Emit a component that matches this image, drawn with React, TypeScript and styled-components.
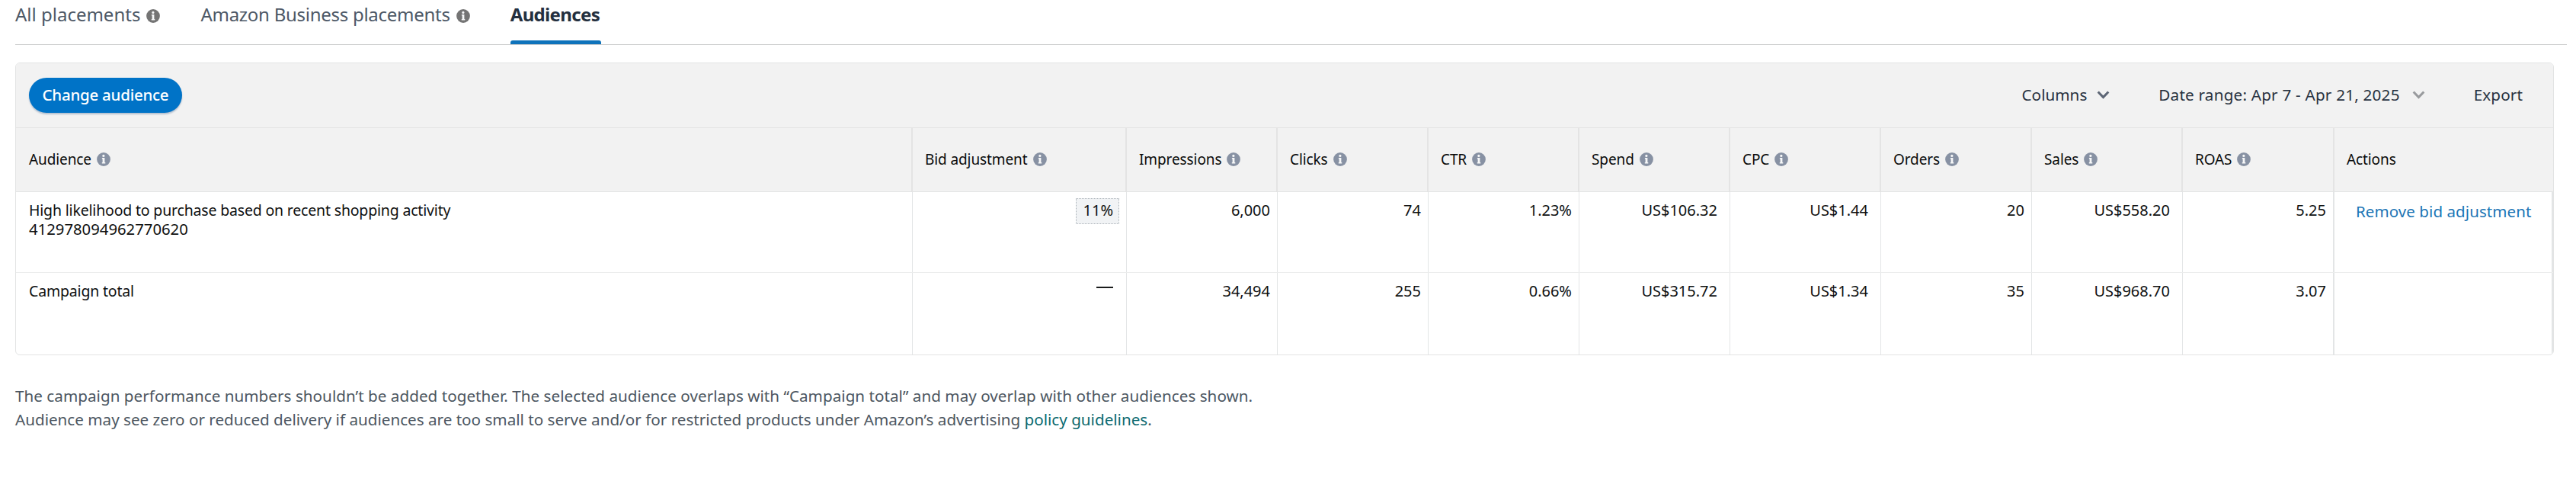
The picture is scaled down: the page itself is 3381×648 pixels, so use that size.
import React from 'react';
import styled, { createGlobalStyle } from 'styled-components';

const Global = createGlobalStyle`
  body {
    margin: 0;
    background: #fff;
    font-family: "Noto Sans", "Open Sans", sans-serif;
    color: #0f1111;
  }
  * { box-sizing: border-box; }
`;

const Page = styled.main`
  width: 3381px;
  height: 648px;
  padding-left: 20px;
  overflow: hidden;
`;

const Tabs = styled.nav`
  display: flex;
  align-items: stretch;
  gap: 53px;
  width: 3349px;
  height: 59px;
  border-bottom: 1px solid #cbcccd;
`;

const Tab = styled.a<{ $track?: number }>`
  display: flex;
  align-items: flex-start;
  gap: 8px;
  padding-top: 3px;
  height: 58px;
  font-size: 24px;
  line-height: 32px;
  white-space: nowrap;
  color: #4d5866;
  letter-spacing: ${(p) => p.$track ?? 0}px;
`;

const ActiveTab = styled(Tab)`
  flex-direction: column;
  justify-content: space-between;
  width: 119px;
  font-weight: 700;
  color: #232f3e;
`;

const Underline = styled.span`
  width: 119px;
  height: 5px;
  border-radius: 3px 3px 0 0;
  background: #0f73bb;
`;

const IconSlot = styled.span`
  display: flex;
  flex: none;
  margin-top: 9px;
`;

const Card = styled.section`
  width: 3332px;
  height: 384px;
  margin-top: 23px;
  border: 1px solid #e3e4e4;
  border-radius: 6px;
  overflow: hidden;
`;

const Toolbar = styled.div`
  display: flex;
  align-items: center;
  justify-content: space-between;
  height: 85px;
  padding: 0 40px 0 17px;
  background: #f2f2f2;
  border-bottom: 1px solid #e4e5e5;
`;

const PrimaryButton = styled.button`
  width: 201px;
  height: 46px;
  padding: 0 0 2px;
  border: 0;
  border-radius: 23px;
  background: #0073c7;
  box-shadow: 0 2px 2px rgba(40, 80, 130, 0.3);
  color: #fff;
  font: 500 20.5px "Noto Sans", sans-serif;
  letter-spacing: -0.25px;
  white-space: nowrap;
`;

const ToolbarActions = styled.div`
  display: flex;
  align-items: center;
  gap: 64px;
`;

const ToolbarItem = styled.span<{ $gap?: number; $track?: number }>`
  display: flex;
  align-items: center;
  gap: ${(p) => p.$gap ?? 0}px;
  padding-bottom: 2px;
  font-size: 20.7px;
  line-height: 30px;
  letter-spacing: ${(p) => p.$track ?? 0}px;
  white-space: nowrap;
  color: #273140;
`;

const Row = styled.div<{ $height: number; $divided?: boolean }>`
  display: grid;
  grid-template-columns: 1177px 281px repeat(7, 198px) 199px 1fr;
  height: ${(p) => p.$height}px;
  border-bottom: ${(p) => (p.$divided ? '1px solid #ebecec' : '0')};
`;

const HeaderRow = styled(Row)`
  background: #f2f2f2;
  border-bottom: 1px solid #e2e3e3;
`;

const HeaderCell = styled.div<{ $first?: boolean; $last?: boolean }>`
  display: flex;
  align-items: center;
  gap: 7px;
  padding: 0 0 1px ${(p) => (p.$first ? 17 : 16)}px;
  border-right: ${(p) => (p.$last ? '0' : '2px solid #e4e4e4')};
  font-size: 19px;
  letter-spacing: -0.1px;
  white-space: nowrap;
  color: #0b0c0c;
`;

const Cell = styled.div<{ $right?: number; $strong?: boolean }>`
  padding: 11px ${(p) => p.$right ?? 9}px 0 17px;
  border-right: ${(p) => (p.$strong ? 2 : 1)}px solid #e3e5e6;
  font-size: 20px;
  line-height: 25px;
  text-align: right;
  white-space: nowrap;
`;

const AudienceCell = styled(Cell)`
  text-align: left;
  font-size: 19.5px;
  letter-spacing: -0.18px;
`;

const AudienceId = styled.div`
  font-size: 20.3px;
  letter-spacing: 0;
`;

const BidCell = styled(Cell)`
  display: flex;
  justify-content: flex-end;
  align-items: flex-start;
  padding: 8px 9px 0 0;
`;

const BidValue = styled.span`
  width: 57px;
  height: 34px;
  padding: 2px 7px 0 0;
  border: 1px dotted #aab2b8;
  background: #f1f3f5;
`;

const Dash = styled.span`
  width: 22px;
  height: 2px;
  margin: 10px 8px 0 0;
  background: #1a1c1c;
`;

const ActionCell = styled(Cell)`
  padding: 13px 0 0 28px;
  text-align: left;
`;

const RemoveLink = styled.a`
  font-size: 20.5px;
  letter-spacing: 0.08px;
  color: #1b75b5;
`;

const Note = styled.p`
  margin: 38px 0 0;
  font-size: 20.65px;
  line-height: 31px;
  letter-spacing: ${0.02}px;
  white-space: nowrap;
  color: #4c5661;
`;

const NoteLine = styled.span<{ $track: number }>`
  display: block;
  letter-spacing: ${(p) => p.$track}px;
`;

const PolicyLink = styled.a`
  color: #0b6a70;
`;

const InfoIcon = ({ color = '#8791a3' }: { color?: string }) => (
  <svg width="18" height="18" viewBox="0 0 18 18">
    <circle cx="9" cy="9" r="8.9" fill={color} />
    <circle cx="8.9" cy="4.4" r="1.6" fill="#f6f7f8" />
    <path d="M6.9 7.1h3.5v6h.9v1.4H6.8v-1.4h.8V8.5h-.7z" fill="#f6f7f8" />
  </svg>
);

const Chevron = ({ color }: { color: string }) => (
  <svg width="17" height="11" viewBox="0 0 17 11" fill="none">
    <path d="M1.7 1.5 8.5 8.5 15.3 1.5" stroke={color} strokeWidth="3.1" />
  </svg>
);

const metrics = ['Bid adjustment', 'Impressions', 'Clicks', 'CTR', 'Spend', 'CPC', 'Orders', 'Sales', 'ROAS'];

const audienceValues = ['6,000', '74', '1.23%', 'US$106.32', 'US$1.44', '20', 'US$558.20', '5.25'];
const totalValues = ['34,494', '255', '0.66%', 'US$315.72', 'US$1.34', '35', 'US$968.70', '3.07'];

const Values = ({ items }: { items: string[] }) => (
  <>
    {items.map((value, i) => (
      <Cell
        key={i}
        $right={value.startsWith('US$') ? 16 : 9}
        $strong={i === items.length - 1}
      >
        {value}
      </Cell>
    ))}
  </>
);

export default function App() {
  return (
    <Page>
      <Global />
      <Tabs>
        <Tab>
          All placements
          <IconSlot><InfoIcon color="#747474" /></IconSlot>
        </Tab>
        <Tab $track={-0.27}>
          Amazon Business placements
          <IconSlot><InfoIcon color="#747474" /></IconSlot>
        </Tab>
        <ActiveTab $track={-0.65}>
          Audiences
          <Underline />
        </ActiveTab>
      </Tabs>

      <Card>
        <Toolbar>
          <PrimaryButton>Change audience</PrimaryButton>
          <ToolbarActions>
            <ToolbarItem $gap={13}>
              Columns
              <Chevron color="#5d6675" />
            </ToolbarItem>
            <ToolbarItem $gap={16} $track={0.2}>
              Date range: Apr 7 - Apr 21, 2025
              <Chevron color="#999b9e" />
            </ToolbarItem>
            <ToolbarItem $track={0.1}>Export</ToolbarItem>
          </ToolbarActions>
        </Toolbar>

        <HeaderRow $height={84}>
          <HeaderCell $first>
            Audience
            <InfoIcon />
          </HeaderCell>
          {metrics.map((name) => (
            <HeaderCell key={name}>
              {name}
              <InfoIcon />
            </HeaderCell>
          ))}
          <HeaderCell $last>Actions</HeaderCell>
        </HeaderRow>

        <Row $height={106} $divided>
          <AudienceCell>
            High likelihood to purchase based on recent shopping activity
            <AudienceId>412978094962770620</AudienceId>
          </AudienceCell>
          <BidCell><BidValue>11%</BidValue></BidCell>
          <Values items={audienceValues} />
          <ActionCell $strong><RemoveLink>Remove bid adjustment</RemoveLink></ActionCell>
        </Row>
        <Row $height={107}>
          <AudienceCell>Campaign total</AudienceCell>
          <BidCell><Dash /></BidCell>
          <Values items={totalValues} />
          <ActionCell $strong />
        </Row>
      </Card>

      <Note>
        <NoteLine $track={0.03}>
          The campaign performance numbers shouldn’t be added together. The selected audience overlaps with “Campaign total” and may overlap with other audiences shown.
        </NoteLine>
        <NoteLine $track={0}>
          Audience may see zero or reduced delivery if audiences are too small to serve and/or for restricted products under Amazon’s advertising <PolicyLink>policy guidelines</PolicyLink>.
        </NoteLine>
      </Note>
    </Page>
  );
}
